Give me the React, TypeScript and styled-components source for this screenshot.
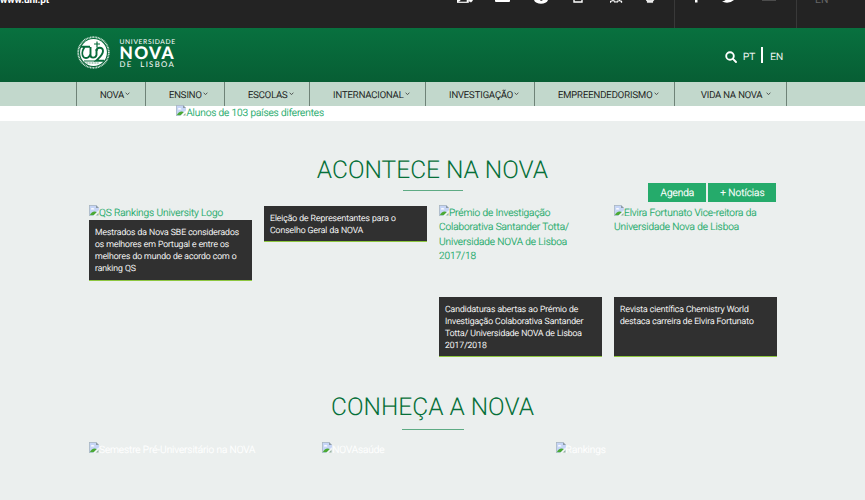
import React from 'react';
import styled, { createGlobalStyle } from 'styled-components';

const GlobalStyle = createGlobalStyle`
  * { box-sizing: border-box; }
  body { margin: 0; background: #ebefee; font-family: Roboto, "Open Sans", sans-serif; font-weight: 300; text-rendering: geometricPrecision; }
  #root { height: 500px; overflow: hidden; }
`;

const TopBar = styled.div`
  height: 28px;
  display: flex;
  overflow: hidden;
  background: #232323;
`;
const SiteName = styled.span`
  width: 457px;
  margin-top: -6px;
  font-size: 10px;
  line-height: 14px;
  font-weight: 700;
  letter-spacing: -0.1px;
  color: #fff;
`;
const Slot = styled.span<{ $w: number }>`
  width: ${p => p.$w}px;
  flex: none;
  svg { display: block; }
`;
const Rule = styled.span<{ $gap: number }>`
  width: 1px;
  height: 28px;
  flex: none;
  margin-right: ${p => p.$gap}px;
  background: #393939;
`;
const TopLang = styled.span`
  margin-top: -8px;
  font-size: 10.4px;
  line-height: 15px;
  font-weight: 400;
  color: #666;
`;

const Banner = styled.header`
  height: 54px;
  padding: 0 82px 0 77px;
  display: flex;
  justify-content: space-between;
  background: linear-gradient(#08713f, #075e34);
`;
const Brand = styled.div`
  display: flex;
  gap: 9.5px;
  padding-top: 8px;
`;
const BrandText = styled.div`
  color: #fff;
  font-family: Lato, sans-serif;
  padding-top: 2px;
  width: 58px;
`;
const BrandLine = styled.div<{ $size: number; $h: number; $w: number; $ls: number; $ws?: number }>`
  font-size: ${p => p.$size}px;
  line-height: ${p => p.$h}px;
  font-weight: ${p => p.$w};
  letter-spacing: ${p => p.$ls}px;
  word-spacing: ${p => p.$ws || 0}px;
  white-space: nowrap;
`;
const Tools = styled.div`
  display: flex;
  padding-top: 19px;
  height: 35px;
  font-size: 10px;
  line-height: 22px;
  color: #fff;
  -webkit-text-stroke: 0.2px currentColor;
  svg { margin: 4px 6px 0 0; }
`;
const Divider = styled.span`
  width: 2px;
  height: 16px;
  margin: 0 7px 0 6px;
  background: #fff;
`;

const Nav = styled.nav`
  height: 24px;
  padding-left: 76.4px;
  display: flex;
  background: #c2d8cc;
`;
const NavItem = styled.a<{ $w: number; $pad: number; $gap?: number }>`
  width: ${p => p.$w}px;
  padding-left: ${p => p.$pad}px;
  border-left: 1px solid #6e8277;
  display: flex;
  font-size: 9.36px;
  line-height: 27px;
  font-weight: 300;
  color: #111;
  -webkit-text-stroke: 0.2px currentColor;
  white-space: nowrap;
  svg { margin: 10px 0 0 ${p => p.$gap || 1.2}px; }
`;

const Hero = styled.div`
  height: 15px;
  padding-left: 176.4px;
  background: #fff;
`;
const Alt = styled.div<{ $white?: boolean }>`
  position: relative;
  top: 1px;
  font-size: 10.08px;
  line-height: 14.4px;
  letter-spacing: -0.09px;
  color: ${p => (p.$white ? '#fff' : '#25ab6b')};
  -webkit-text-stroke: 0.2px currentColor;
  white-space: nowrap;
  svg { display: inline-block; vertical-align: 0; margin-top: -2px; }
`;

const Section = styled.section`
  padding: 0 88.6px 0 89px;
`;
const Title = styled.h2<{ $top: number }>`
  margin: 0 0.4px 0 0;
  padding-top: ${p => p.$top}px;
  font-size: 24.5px;
  line-height: 30px;
  font-weight: 300;
  text-align: center;
  color: #067039;
`;
const Underline = styled.div<{ $top: number; $w: number }>`
  width: ${p => p.$w}px;
  height: 1px;
  margin: ${p => p.$top}px auto 0;
  background: #5eab84;
`;
const Actions = styled.div`
  display: flex;
  justify-content: flex-end;
  gap: 2px;
  margin: -8px 0 4px;
`;
const Button = styled.a<{ $w: number }>`
  width: ${p => p.$w}px;
  height: 19px;
  background: #25ab6b;
  color: #fff;
  font-size: 10.08px;
  font-weight: 300;
  -webkit-text-stroke: 0.25px currentColor;
  line-height: 21px;
  text-align: center;
`;
const NewsGrid = styled.div`
  display: grid;
  grid-template-columns: repeat(4, 163px);
  gap: 12px;
  height: 151px;
`;
const NewsItem = styled.article<{ $spread?: boolean }>`
  display: flex;
  flex-direction: column;
  justify-content: ${p => (p.$spread ? 'space-between' : 'flex-start')};
`;
const Caption = styled.div<{ $h: number }>`
  height: ${p => p.$h}px;
  padding: 6.5px 6px 0;
  flex: none;
  background: #303030;
  border-bottom: 1px solid #8dc63f;
  font-size: 8.64px;
  line-height: 12.1px;
  font-weight: 300;
  color: #fff;
  -webkit-text-stroke: 0.15px currentColor;
  white-space: nowrap;
`;
const Links = styled.div`
  display: grid;
  grid-template-columns: repeat(3, 233.3px);
  padding-top: 12.5px;
`;

const Broken = () => (
  <svg width="10" height="11" viewBox="0 0 10 11">
    <path d="M0 0h7l3 3v3L6.5 9 5 11H0z" fill="#c6d5f6" />
    <path d="M0 0h7v.8H.7V11H0z" fill="#a9b5bd" />
    <path d="M7 0v3h3z" fill="#8e9ba4" />
    <path d="M2 4.2c0-1.3 1.5-1.7 2-.8 1-.2 1.5.5 1.3 1H2z" fill="#fff" />
    <path d="M.8 10.3C2 7 5.5 5.5 8 7.2l-3.2 3.1z" fill="#4ba934" />
    <path d="M10 5.5 4.7 11" stroke="#fff" strokeWidth="1" />
    <path d="M9.5 8v2.5H7z" fill="#8fae9a" />
  </svg>
);
const Chevron = () => (
  <svg width="5" height="4" viewBox="0 0 5 4"><path d="M.6.8 2.5 2.5 4.4.8" fill="none" stroke="#333" strokeWidth=".8" /></svg>
);
const Seal = () => (
  <svg width="33" height="33" viewBox="0 0 33 33" fill="none">
    <circle cx="16.5" cy="16.5" r="15.3" stroke="#d7e9df" strokeWidth="1.700" strokeDasharray="1 .55" />
    <circle cx="16.5" cy="16.5" r="13.4" fill="#fff" />
    <path d="M4 10.700h9M7.500 11c-2.500 4-3 8.500-.5 10.500 3 1.500 5.500-.5 6.500-3.500M13.500 11v8c0 3.500 5 3.500 6 0v-6" stroke="#076b3b" strokeWidth="1.900" />
    <path d="M19.500 15c0-4 6.500-4.500 6.500 0 0 4-3 6-7 9.800h8" stroke="#076b3b" strokeWidth="1.900" />
    <path d="M20 5.500v6M17 8h6M7 25h11" stroke="#076b3b" strokeWidth="1.200" />
    <path d="M7 27h15" stroke="#076b3b" strokeWidth=".7" strokeDasharray="1 .6" />
  </svg>
);

const topIcons: [number, React.ReactNode][] = [
  [38, <path d="M0 0h3v1H1.500v1H10V0h1.500v2.500H0zM12 0c0 2.500 3.500 2.500 3.500 0" stroke="#fff" fill="#fff" strokeWidth=".6" />],
  [39, <path d="M0 0h15v1q0 1-1 1H1Q0 2 0 1z" fill="#fff" />],
  [39, <><path d="M0 0h14c-1.500 5-12.500 5-14 0z" fill="#fff" /><path d="M6 0h3L7 1z" fill="#232323" /></>],
  [37, <path d="M1 0v2h8V0" stroke="#fff" strokeWidth="1.400" fill="none" />],
  [36, <path d="M.5 2.800V1.500L3 .5l2 1v1.300M7 2.800V1.500L9.500.5l2 1v1.300M3 0v1M9.500 0v1" stroke="#fff" strokeWidth="1.300" fill="none" />],
  [28, <path d="M0 0h8v1H7v1.700H1V1H0zM3 0v2M5 0v2" fill="#fff" stroke="#8a8a8a" strokeWidth=".3" />],
];

const nav: [string, number, number, number?][] = [
  ['NOVA', 69, 22.5], ['ENSINO', 79, 22.5], ['ESCOLAS', 85, 22.5], ['INTERNACIONAL', 116, 22.5],
  ['INVESTIGAÇÃO', 109, 22.5], ['EMPREENDEDORISMO', 140, 22.5], ['VIDA NA NOVA', 112, 25.5, 4],
];

export default function App() {
  return (
    <>
      <GlobalStyle />
      <TopBar>
        <SiteName>www.unl.pt</SiteName>
        {topIcons.map(([w, shape], i) => (
          <Slot key={i} $w={w}><svg width="17" height="5" viewBox="0 0 17 5">{shape}</svg></Slot>
        ))}
        <Rule $gap={19} />
        <Slot $w={28}><svg width="6" height="4"><path d="M1 0h2.500v2.500H1z" fill="#fff" /></svg></Slot>
        <Slot $w={40}><svg width="15" height="4"><path d="M3 0h9Q9 2.700 5 2.700 2 2.700 0 1.300q2 0 3.500-1z" fill="#fff" /></svg></Slot>
        <Slot $w={34}><svg width="15" height="3"><path d="M0 .5h14" stroke="#4c4c4c" /></svg></Slot>
        <Rule $gap={18} />
        <TopLang>EN</TopLang>
      </TopBar>
      <Banner>
        <Brand>
          <Seal />
          <BrandText>
            <BrandLine $size={6.7} $h={8} $w={400} $ls={0.66}>UNIVERSIDADE</BrandLine>
            <BrandLine $size={17.3} $h={14} $w={900} $ls={1.3}>NOVA</BrandLine>
            <BrandLine $size={7.8} $h={8} $w={400} $ls={1.3} $ws={4.5}>DE LISBOA</BrandLine>
          </BrandText>
        </Brand>
        <Tools>
          <svg width="12" height="12" viewBox="0 0 12 12" fill="none" stroke="#fff" strokeWidth="1.900">
            <circle cx="5" cy="5" r="3.800" /><path d="m7.700 7.700 3.300 3.300" strokeLinecap="round" />
          </svg>
          <span>PT</span><Divider /><span>EN</span>
        </Tools>
      </Banner>
      <Nav>
        {nav.map(([label, w, pad, gap]) => (
          <NavItem key={label} $w={w} $pad={pad} $gap={gap}>{label}<Chevron /></NavItem>
        ))}
        <NavItem $w={1} $pad={0} />
      </Nav>
      <Hero><Alt><Broken />Alunos de 103 países diferentes</Alt></Hero>
      <Section>
        <Title $top={34}>ACONTECE NA NOVA</Title>
        <Underline $top={5} $w={60} />
        <Actions><Button $w={58}>Agenda</Button><Button $w={68}>+ Notícias</Button></Actions>
        <NewsGrid>
          <NewsItem>
            <Alt><Broken />QS Rankings University Logo</Alt>
            <Caption $h={60.6}>Mestrados da Nova SBE considerados<br />os melhores em Portugal e entre os<br />melhores do mundo de acordo com o<br />ranking QS</Caption>
          </NewsItem>
          <NewsItem>
            <Caption $h={36}>Eleição de Representantes para o<br />Conselho Geral da NOVA</Caption>
          </NewsItem>
          <NewsItem $spread>
            <Alt><Broken />Prémio de Investigação<br />Colaborativa Santander Totta/<br />Universidade NOVA de Lisboa<br />2017/18</Alt>
            <Caption $h={60}>Candidaturas abertas ao Prémio de<br />Investigação Colaborativa Santander<br />Totta/ Universidade NOVA de Lisboa<br />2017/2018</Caption>
          </NewsItem>
          <NewsItem $spread>
            <Alt><Broken />Elvira Fortunato Vice-reitora da<br />Universidade Nova de Lisboa</Alt>
            <Caption $h={60}>Revista científica Chemistry World<br />destaca carreira de Elvira Fortunato</Caption>
          </NewsItem>
        </NewsGrid>
        <Title $top={35}>CONHEÇA A NOVA</Title>
        <Underline $top={7} $w={62} />
        <Links>
          <Alt $white><Broken />Semestre Pré-Universitário na NOVA</Alt>
          <Alt $white><Broken />NOVAsaúde</Alt>
          <Alt $white><Broken />Rankings</Alt>
        </Links>
      </Section>
    </>
  );
}
